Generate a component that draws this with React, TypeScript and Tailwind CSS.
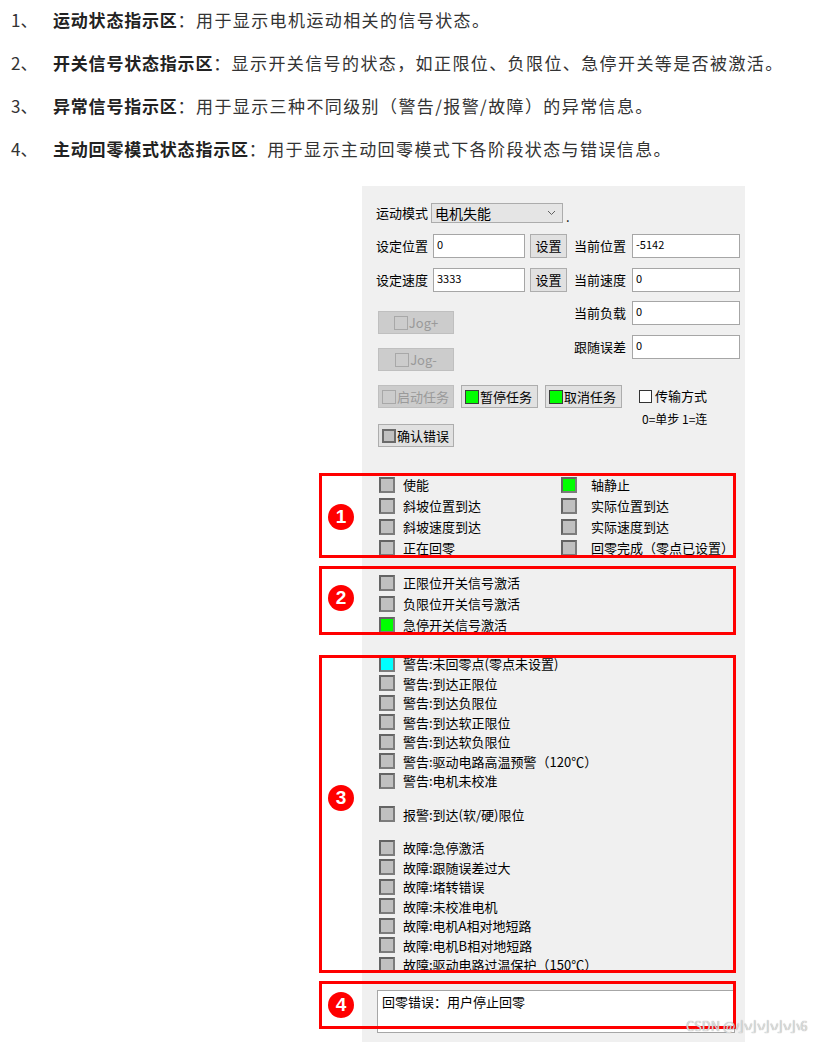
import React from 'react'

const intro = [
  { no: '1、', title: '运动状态指示区', body: '用于显示电机运动相关的信号状态。' },
  { no: '2、', title: '开关信号状态指示区', body: '显示开关信号的状态，如正限位、负限位、急停开关等是否被激活。' },
  { no: '3、', title: '异常信号指示区', body: '用于显示三种不同级别（警告/报警/故障）的异常信息。' },
  { no: '4、', title: '主动回零模式状态指示区', body: '用于显示主动回零模式下各阶段状态与错误信息。' },
]

const Led = ({ color = 'gray' }: { color?: 'gray' | 'green' | 'cyan' }) => {
  const fill = color === 'green' ? 'bg-[#00ff00]' : color === 'cyan' ? 'bg-[#00ffff]' : 'bg-[#c0c0c0]'
  return <span className={`block w-[16px] h-[16px] shrink-0 border-2 border-t-[#646464] border-l-[#646464] border-b-[#7c7c7c] border-r-[#7c7c7c] ${fill}`} />
}

const Field = ({ value, w }: { value: string; w: string }) => (
  <div className={`${w} h-[24px] bg-white border border-[#a6a6a6] pl-[3px] pt-[2px] text-[11px] leading-[14px] text-black`}>{value}</div>
)

const Btn = ({ label, led, disabled, w }: { label: string; led?: 'gray' | 'green'; disabled?: boolean; w: string }) => (
  <div
    className={`${w} h-[23px] flex items-center px-[3px] border text-[13px] ${
      disabled ? 'bg-[#cccccc] border-[#bfbfbf] text-[#9a9a9a]' : 'bg-[#e1e1e1] border-[#adadad] text-black'
    }`}
  >
    {led === 'green' && <span className="w-[14px] h-[14px] mr-[1px] bg-[#00ff00] border border-[#3a3a3a]" />}
    {led === 'gray' && <span className="w-[14px] h-[14px] mr-[1px] bg-[#c0c0c0] border-2 border-[#6a6a6a]" />}
    {disabled && <span className="w-[14px] h-[14px] mr-[1px] border border-[#a8a8a8]" />}
    <span>{label}</span>
  </div>
)

const Row = ({ text, color, h = 'h-[21px]' }: { text: string; color?: 'gray' | 'green' | 'cyan'; h?: string }) => (
  <div className={`${h} flex items-center pl-[17px]`}>
    <Led color={color} />
    <span className="ml-[8px] text-[13px] text-black whitespace-nowrap">{text}</span>
  </div>
)

const warnings = [
  '警告:未回零点(零点未设置)',
  '警告:到达正限位',
  '警告:到达负限位',
  '警告:到达软正限位',
  '警告:到达软负限位',
  '警告:驱动电路高温预警（120℃）',
  '警告:电机未校准',
]

const faults = [
  '故障:急停激活',
  '故障:跟随误差过大',
  '故障:堵转错误',
  '故障:未校准电机',
  '故障:电机A相对地短路',
  '故障:电机B相对地短路',
  '故障:驱动电路过温保护（150℃）',
]

const motion = [
  ['使能', 'gray', '轴静止', 'green'],
  ['斜坡位置到达', 'gray', '实际位置到达', 'gray'],
  ['斜坡速度到达', 'gray', '实际速度到达', 'gray'],
  ['正在回零', 'gray', '回零完成（零点已设置）', 'gray'],
] as const

const boxes = [
  { n: '1', top: 'top-[473px] h-[85px]', circle: 'top-[504px]' },
  { n: '2', top: 'top-[566px] h-[69px]', circle: 'top-[585px]' },
  { n: '3', top: 'top-[655px] h-[318px]', circle: 'top-[785px]' },
  { n: '4', top: 'top-[981px] h-[48px]', circle: 'top-[992px]' },
]

export default function App() {
  return (
    <div className="relative w-[839px] h-[1042px] overflow-hidden bg-white font-['Noto_Sans_CJK_SC',sans-serif]">
      {/* intro list */}
      <div className="h-[186px] pt-[8px] flex flex-col gap-[19px]">
        {intro.map((l) => (
          <div key={l.no} className="flex leading-[24px] text-[17px] text-[#333333] whitespace-nowrap">
            <span className="w-[53px] pl-[11px]">{l.no}</span>
            <span className="font-bold text-[#222222] tracking-[0.8px]">{l.title}</span>
            <span className="tracking-[1.4px]">：{l.body}</span>
          </div>
        ))}
      </div>

      {/* form panel */}
      <div className="ml-[362px] w-[383px] h-[856px] bg-[#f0f0f0] text-[13px] text-black">
        <div className="pt-[17px] flex items-center h-[37px] pl-[14px]">
          <span className="w-[55px]">运动模式</span>
          <div className="w-[132px] h-[20px] bg-[#e5e5e5] border border-[#acacac] flex items-center pl-[3px] pr-[6px]">
            <span className="flex-1 leading-none text-[14px]">电机失能</span>
            <svg width="9" height="6" viewBox="0 0 9 6">
              <path d="M1 1 L4.5 4.5 L8 1" fill="none" stroke="#606060" strokeWidth="1" />
            </svg>
          </div>
          <span className="ml-[3px] self-end leading-none">.</span>
        </div>

        {[
          ['设定位置', '0', '当前位置', '-5142', 'mt-[11px]'],
          ['设定速度', '3333', '当前速度', '0', 'mt-[10px]'],
        ].map(([a, av, b, bv, mt]) => (
          <div key={a} className={`${mt} flex items-center h-[24px] pl-[14px]`}>
            <span className="w-[57px]">{a}</span>
            <Field value={av} w="w-[92px]" />
            <div className="ml-[5px] w-[37px] h-[24px] bg-[#e1e1e1] border border-[#adadad] flex items-center justify-center">设置</div>
            <span className="ml-[7px] w-[58px]">{b}</span>
            <Field value={bv} w="w-[108px]" />
          </div>
        ))}

        <div className="flex items-start">
          <div className="w-[212px] pl-[16px] flex flex-col">
            <div className="mt-[19px]">
              <Btn label="Jog+" disabled w="w-[76px] justify-center" />
            </div>
            <div className="mt-[14px]">
              <Btn label="Jog-" disabled w="w-[76px] justify-center" />
            </div>
          </div>
          <div className="flex flex-col">
            <div className="mt-[9px] flex items-center">
              <span className="w-[58px]">当前负载</span>
              <Field value="0" w="w-[108px]" />
            </div>
            <div className="mt-[10px] flex items-center">
              <span className="w-[58px]">跟随误差</span>
              <Field value="0" w="w-[108px]" />
            </div>
          </div>
        </div>

        <div className="mt-[14px] h-[23px] flex items-start pl-[16px]">
          <Btn label="启动任务" disabled w="w-[76px]" />
          <div className="ml-[7px]">
            <Btn label="暂停任务" led="green" w="w-[77px]" />
          </div>
          <div className="ml-[7px]">
            <Btn label="取消任务" led="green" w="w-[77px]" />
          </div>
          <div className="ml-[17px] flex flex-col">
            <div className="flex items-center mt-[3px]">
              <span className="w-[13px] h-[13px] bg-white border border-[#333333]" />
              <span className="ml-[3px] leading-[16px]">传输方式</span>
            </div>
            <span className="mt-[8px] ml-[3px] text-[12px] leading-[14px] whitespace-nowrap">0=单步 1=连</span>
          </div>
        </div>

        <div className="mt-[16px] pl-[16px]">
          <Btn label="确认错误" led="gray" w="w-[76px]" />
        </div>

        {/* motion states */}
        <div className="mt-[27px] grid grid-cols-[199px_1fr]">
          {motion.map(([a, ac, b, bc]) => (
            <React.Fragment key={a}>
              <Row text={a} color={ac} />
              <div className="h-[21px] flex items-center">
                <Led color={bc} />
                <span className="ml-[14px] whitespace-nowrap">{b}</span>
              </div>
            </React.Fragment>
          ))}
        </div>

        {/* switch signals */}
        <div className="mt-[14px]">
          <Row text="正限位开关信号激活" />
          <Row text="负限位开关信号激活" />
          <Row text="急停开关信号激活" color="green" />
        </div>

        {/* abnormal signals */}
        <div className="mt-[19px]">
          {warnings.map((w, i) => (
            <Row key={w} text={w} color={i === 0 ? 'cyan' : 'gray'} h="h-[19.5px]" />
          ))}
        </div>
        <div className="mt-[14px]">
          <Row text="报警:到达(软/硬)限位" h="h-[19.5px]" />
        </div>
        <div className="mt-[14px]">
          {faults.map((f) => (
            <Row key={f} text={f} h="h-[19.5px]" />
          ))}
        </div>

        {/* homing error */}
        <div className="mt-[15px] ml-[15px] w-[358px] h-[43px] bg-white border border-[#a6a6a6] px-[4px] pt-[1px] text-[13px]">
          回零错误：用户停止回零
        </div>
      </div>

      {/* annotations */}
      {boxes.map((b) => (
        <React.Fragment key={b.n}>
          <div className={`absolute left-[319px] w-[417px] ${b.top} border-[3px] border-[#ff0000]`} />
          <div
            className={`absolute left-[328px] ${b.circle} w-[26px] h-[26px] rounded-full bg-[#ff0000] text-white font-bold text-[19px] leading-[26px] text-center font-['Liberation_Sans',sans-serif]`}
          >
            {b.n}
          </div>
        </React.Fragment>
      ))}

      <div className="absolute left-[686px] top-[1016px] text-[13px] text-[#e0e0e0] whitespace-nowrap [text-shadow:0_0_1px_#8a8a8a]">
        CSDN @小小小小小6
      </div>
    </div>
  )
}
